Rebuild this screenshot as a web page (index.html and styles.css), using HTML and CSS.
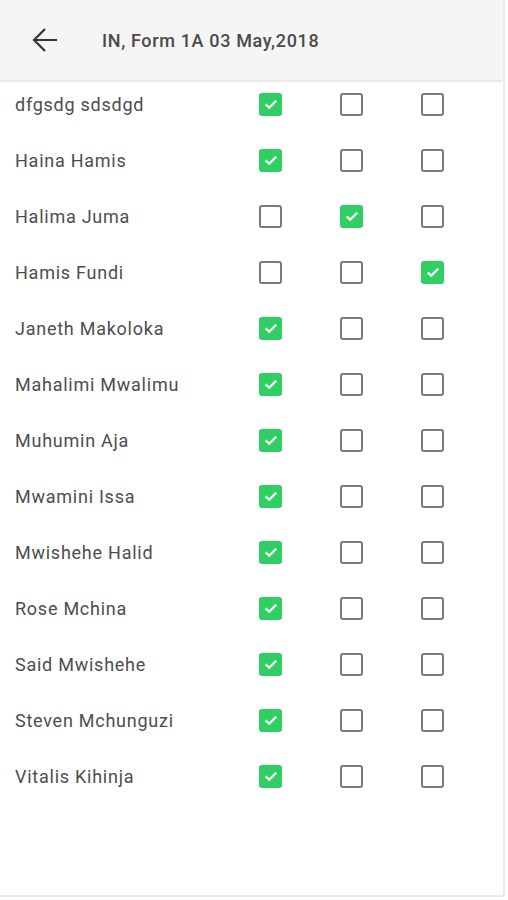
FILE: index.html
```html
<!DOCTYPE html>
<html lang="en">
<head>
  <meta charset="UTF-8" />
  <meta name="viewport" content="width=device-width, initial-scale=1.0" />
  <title>Attendance</title>
  <link rel="stylesheet" href="styles.css">
</head>
<body>
  <div class="screen">
    <div class="top-bar">
      <button class="back-btn" aria-label="Back">
        <svg width="26" height="26" viewBox="0 0 26 26"><path d="M25 13H2M13 2L2 13l11 11" fill="none" stroke="#333" stroke-width="2.2"/></svg>
      </button>
      <div class="title">IN, Form 1A 03 May,2018</div>
    </div>

    <div class="student-list">
      <div class="row"><span class="name">dfgsdg sdsdgd</span><span class="box on"></span><span class="box"></span><span class="box"></span></div>
      <div class="row"><span class="name">Haina Hamis</span><span class="box on"></span><span class="box"></span><span class="box"></span></div>
      <div class="row"><span class="name">Halima Juma</span><span class="box"></span><span class="box on"></span><span class="box"></span></div>
      <div class="row"><span class="name">Hamis Fundi</span><span class="box"></span><span class="box"></span><span class="box on"></span></div>
      <div class="row"><span class="name">Janeth Makoloka</span><span class="box on"></span><span class="box"></span><span class="box"></span></div>
      <div class="row"><span class="name">Mahalimi Mwalimu</span><span class="box on"></span><span class="box"></span><span class="box"></span></div>
      <div class="row"><span class="name">Muhumin Aja</span><span class="box on"></span><span class="box"></span><span class="box"></span></div>
      <div class="row"><span class="name">Mwamini Issa</span><span class="box on"></span><span class="box"></span><span class="box"></span></div>
      <div class="row"><span class="name">Mwishehe Halid</span><span class="box on"></span><span class="box"></span><span class="box"></span></div>
      <div class="row"><span class="name">Rose Mchina</span><span class="box on"></span><span class="box"></span><span class="box"></span></div>
      <div class="row"><span class="name">Said Mwishehe</span><span class="box on"></span><span class="box"></span><span class="box"></span></div>
      <div class="row"><span class="name">Steven Mchunguzi</span><span class="box on"></span><span class="box"></span><span class="box"></span></div>
      <div class="row"><span class="name">Vitalis Kihinja</span><span class="box on"></span><span class="box"></span><span class="box"></span></div>
    </div>
  </div>
</body>
</html>
```

FILE: styles.css
```css
* {
  box-sizing: border-box;
  margin: 0;
  padding: 0;
}
body {
  font-family: Roboto, 'Noto Sans', sans-serif;
  background: #fff;
  color: #444;
}
.screen {
  width: 505px;
  height: 897px;
  background: #fff;
  border-right: 2px solid #ececec;
  border-bottom: 2px solid #ececec;
  overflow: hidden;
}
.top-bar {
  position: relative;
  z-index: 1;
  height: 80px;
  background: #f5f5f5;
  display: flex;
  align-items: center;
  box-shadow: 0 1px 3px rgba(0, 0, 0, 0.15);
}
.back-btn {
  width: 102px;
  height: 80px;
  border: none;
  background: none;
  display: flex;
  align-items: center;
  padding-left: 32px;
}
.title {
  font-size: 18px;
  font-weight: 500;
  letter-spacing: 0.65px;
  color: #4a4a4a;
}
.student-list {
  margin-top: -4px;
}
.row {
  display: grid;
  grid-template-columns: 1fr 81px 81px 81px;
  align-items: center;
  justify-items: center;
  height: 56px;
  padding: 0 30px 0 15px;
}
.name {
  justify-self: start;
  font-size: 18px;
  letter-spacing: 0.75px;
  color: #4d4d4d;
}
.box {
  width: 23px;
  height: 23px;
  border: 2px solid #7a7a7a;
  border-radius: 3px;
}
.box.on {
  border: none;
  background: #2fcf63 url("data:image/svg+xml,%3Csvg xmlns='http://www.w3.org/2000/svg' viewBox='0 0 24 24'%3E%3Cpath d='M5 12.5l4.5 4.5L19 7.5' fill='none' stroke='%23fff' stroke-width='3'/%3E%3C/svg%3E") center / 18px no-repeat;
}
```
